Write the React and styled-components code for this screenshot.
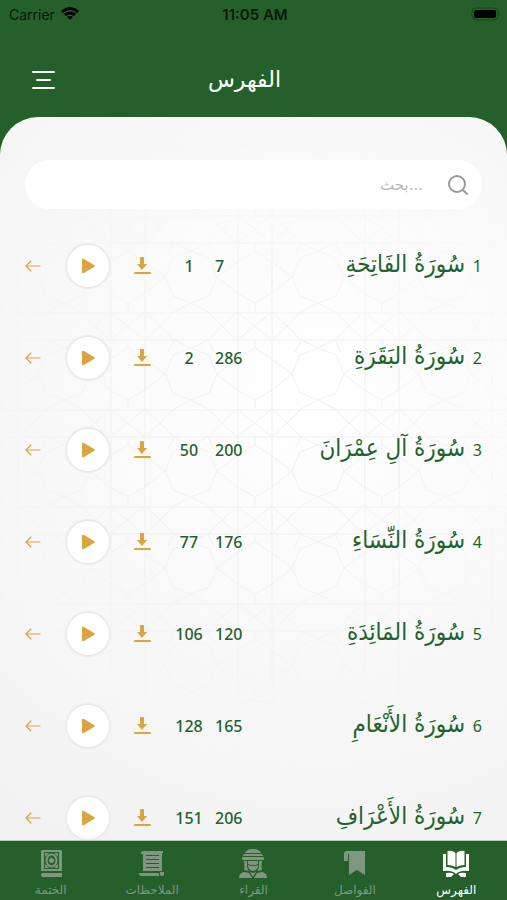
import styled, { createGlobalStyle } from "styled-components";

const green = "#25602a";
const gold = "#dca440";
const muted = "#819682";

const GlobalStyle = createGlobalStyle`
  * {
    box-sizing: border-box;
  }
  body {
    margin: 0;
    background-color: ${green};
    font-family: "Noto Sans", "DejaVu Sans", sans-serif;
  }
  button {
    border: none;
    padding: 0;
    background: transparent;
    cursor: pointer;
  }
  svg {
    display: block;
  }
`;

const Screen = styled.div`
  height: 100vh;
  display: flex;
  flex-direction: column;
  background-color: ${green};
`;

const StatusBar = styled.div`
  display: grid;
  grid-template-columns: 1fr auto 1fr;
  align-items: center;
  height: 28px;
  padding: 0 6px 0 9px;
  color: #071a09;
  font-family: Inter, sans-serif;
  font-size: 14px;
`;

const Carrier = styled.div`
  display: flex;
  align-items: center;
  gap: 6px;
`;

const Clock = styled.div`
  font-size: 15px;
  font-weight: 600;
`;

const Battery = styled.div`
  justify-self: end;
`;

const Header = styled.header`
  display: grid;
  grid-template-columns: 1fr auto 1fr;
  align-items: center;
  height: 89px;
  padding: 15px 32px 0;
`;

const MenuButton = styled.button`
  width: 23px;
`;

const Title = styled.h1`
  margin: 0;
  padding-right: 18px;
  color: white;
  font-family: "DejaVu Sans", sans-serif;
  font-size: 22px;
  font-weight: 400;
  line-height: 28px;
`;

const Panel = styled.main`
  position: relative;
  flex: 1;
  min-height: 0;
  overflow: hidden;
  border-radius: 38px 38px 0 0;
  background: radial-gradient(circle at 62% 38%, #ffffff 0%, #f9f9f9 45%, #f1f1f1 100%);
`;

const Pattern = styled.svg`
  position: absolute;
  inset: 0;
  width: 100%;
  height: 100%;
  mask-image: radial-gradient(circle at 50% 45%, black 25%, transparent 70%);
`;

const Content = styled.div`
  position: relative;
  padding: 43px 25px 0;
`;

const SearchBox = styled.label`
  display: flex;
  align-items: center;
  gap: 22px;
  height: 49px;
  padding: 0 13px 0 25px;
  border-radius: 25px;
  background-color: white;
`;

const SearchInput = styled.input`
  flex: 1;
  min-width: 0;
  border: none;
  outline: none;
  background: transparent;
  text-align: right;
  font-family: "DejaVu Sans", sans-serif;
  font-size: 15px;

  &::placeholder {
    color: #b8b8b8;
  }
`;

const List = styled.ul`
  margin: 11px 0 0;
  padding: 0;
  list-style: none;
`;

const Row = styled.li`
  display: grid;
  grid-template-columns: 40px 46px 62px 32px 1fr auto 17px;
  align-items: center;
  height: 92px;
  color: #1f632c;
`;

const IconButton = styled.button`
  justify-self: ${(props) => props.$justify || "center"};
`;

const Play = styled.button`
  display: flex;
  align-items: center;
  justify-content: center;
  width: 46px;
  height: 46px;
  border: 2px solid #ebebee;
  border-radius: 50%;
  background-color: white;
`;

const Count = styled.span`
  font-size: 16px;
  font-weight: 500;
  line-height: 20px;
  white-space: nowrap;
  text-align: center;
`;

const Verses = styled(Count)`
  padding-left: 10px;
  text-align: left;
`;

const Index = styled(Count)`
  font-weight: 400;
  text-align: right;
`;

const Name = styled.h2`
  margin: 0;
  padding-bottom: 4px;
  font-family: "DejaVu Sans Condensed", "DejaVu Sans", sans-serif;
  font-size: 24px;
  font-weight: 400;
  line-height: 44px;
  white-space: nowrap;
`;

const TabBar = styled.nav`
  display: grid;
  grid-template-columns: repeat(5, 1fr);
  height: 60px;
  border-top: 1px solid #b9cdbb;
  background-color: ${green};
`;

const Tab = styled.button`
  display: flex;
  flex-direction: column;
  align-items: center;
  gap: 3px;
  padding-top: 7px;
  color: ${(props) => (props.$active ? "#ffffff" : muted)};
  font-family: "DejaVu Sans", sans-serif;
  font-size: 12px;
  line-height: 18px;
`;

const surahs = [
  { id: 1, name: "سُورَةُ الفَاتِحَةِ", page: 1, verses: 7 },
  { id: 2, name: "سُورَةُ البَقَرَةِ", page: 2, verses: 286 },
  { id: 3, name: "سُورَةُ آلِ عِمْرَانَ", page: 50, verses: 200 },
  { id: 4, name: "سُورَةُ النِّسَاءِ", page: 77, verses: 176 },
  { id: 5, name: "سُورَةُ المَائِدَةِ", page: 106, verses: 120 },
  { id: 6, name: "سُورَةُ الأَنْعَامِ", page: 128, verses: 165 },
  { id: 7, name: "سُورَةُ الأَعْرَافِ", page: 151, verses: 206 },
];

const KhatmaIcon = () => (
  <svg width="30" height="30" viewBox="0 0 30 30" fill="currentColor">
    <path fillRule="evenodd" d="M6 2h19a1 1 0 0 1 1 1v20H5V3a1 1 0 0 1 1-1zM8 4v17h15V4z" />
    <ellipse cx="15.500" cy="12.500" rx="5" ry="6" fill="none" stroke="currentColor" strokeWidth="2" />
    <circle cx="15.500" cy="12.500" r="2.500" />
    <path d="M9 5h4l-4 4zM22 5h-4l4 4zM9 20h4l-4-4zM22 20h-4l4-4z" />
    <path d="M7 25h19v4H7a2 2 0 0 1 0-4z" />
  </svg>
);

const NotesIcon = () => (
  <svg width="30" height="30" viewBox="0 0 30 30" fill="currentColor">
    <path fillRule="evenodd" d="M6 3h20v2h-1v18h-3H6V6H4q0-3 2-3zM9 7v1h13V7zm0 4v1h13v-1zm0 4v1h13v-1zm0 4v1h13v-1z" />
    <path d="M2 25h20v3H4q-2 0-2-3z" />
    <path d="M23 24h4v2q0 2-2 2t-2-2z" />
  </svg>
);

const ReaderIcon = () => (
  <svg width="30" height="30" viewBox="0 0 30 30" fill="currentColor">
    <path d="M7 5q2-4 8-4t8 4z" />
    <path d="M6 6h18l1 2H5z" />
    <rect x="4" y="9" width="22" height="3" rx="1" />
    <path d="M6 13h3v5q0 3 2 5l-5-1q1-3 0-9zM24 13h-3v5q0 3-2 5l5-1q-1-3 0-9z" />
    <path d="M10 13h10v4q0 5-5 6-5-1-5-6z" />
    <path d="M10 16q2 3 5 1 3 2 5-1" fill="none" stroke={green} />
    <path d="M1 30q0-5 5-6l5 1 3 5zM29 30q0-5-5-6l-5 1-3 5zM12 24l3 1 3-1-3 5z" />
  </svg>
);

const BookmarkIcon = () => (
  <svg width="30" height="30" viewBox="0 0 30 30" fill="currentColor">
    <path d="M7 3h18v24l-8-5-8 5V13H4V6q0-3 3-3z" />
    <path d="M8.500 6v7" stroke={green} />
  </svg>
);

const QuranIcon = () => (
  <svg width="30" height="30" viewBox="0 0 30 30" fill="currentColor">
    <path d="M14.500 5v14q-4-2-8-2V3q5-1 8 2zM15.500 5v14q4-2 8-2V3q-5-1-8 2z" />
    <path d="M2 6h3v13q6 0 10 3 4-3 10-3V6h3v17q-9-1-13 3-4-4-13-3z" />
    <path d="M5 25q5-1 8 1l-3 3H5zM25 25q-5-1-8 1l3 3h5z" />
  </svg>
);

const tabs = [
  { label: "الختمة", icon: <KhatmaIcon /> },
  { label: "الملاحظات", icon: <NotesIcon /> },
  { label: "القراء", icon: <ReaderIcon /> },
  { label: "الفواصل", icon: <BookmarkIcon /> },
  { label: "الفهرس", icon: <QuranIcon />, active: true },
];

const Ornament = () => (
  <Pattern aria-hidden="true">
    <defs>
      <pattern id="girih" x="110" y="292" width="127" height="97" patternUnits="userSpaceOnUse">
        <g fill="none" stroke="#f0f0f0" strokeWidth="1">
          <path d="M0 1H127M0 28H127M1 0V97M35 0V97" />
          <path d="M0 28L35 0M0 0L35 28M35 0L50 14 35 28M127 0L112 14 127 28" />
          <path d="M58 40L64 28 50 14 64 0M104 40L98 28 112 14 98 0" />
          <path d="M81 36L99 43 107 62 99 81 81 88 63 81 55 62 63 43z" />
          <path d="M18 36L35 47 35 78 18 88 0 78 0 47z" />
          <path d="M35 47L55 62 35 78M127 47L107 62 127 78M64 97L81 88 98 97M64 28L81 36 98 28M18 28V36M18 88V97" />
        </g>
      </pattern>
    </defs>
    <rect width="100%" height="100%" fill="url(#girih)" />
  </Pattern>
);

const SurahRow = ({ item }) => {
  return (
    <Row>
      <IconButton $justify="start" aria-label="فتح">
        <svg width="16" height="14" viewBox="0 0 16 14" fill="none" stroke={gold} strokeWidth="1.2" strokeLinecap="round">
          <path d="M15 7H1M6 2L1 7l5 5" />
        </svg>
      </IconButton>
      <Play aria-label="تشغيل">
        <svg width="16" height="16" viewBox="0 0 16 16" fill={gold}>
          <path d="M2 2q0-2 2-1l10 6q2 1 0 2L4 15q-2 1-2-1z" />
        </svg>
      </Play>
      <IconButton aria-label="تنزيل">
        <svg width="18" height="18" viewBox="0 0 18 18" fill={gold}>
          <path d="M7 1q0-1 1-1h2q1 0 1 1v6h3l-5 6-5-6h3z" />
          <rect x="1" y="15" width="17" height="2" rx="1" />
        </svg>
      </IconButton>
      <Count>{item.page}</Count>
      <Verses>{item.verses}</Verses>
      <Name dir="rtl">{item.name}</Name>
      <Index>{item.id}</Index>
    </Row>
  );
};

const App = () => {
  return (
    <Screen>
      <GlobalStyle />
      <StatusBar>
        <Carrier>
          Carrier
          <svg width="18" height="14" viewBox="0 0 18 14" fill="none" stroke="#000" strokeWidth="3">
            <path d="M1 5q8-7 16 0M4 8q5-4 10 0" />
            <path d="M6 10q3-2 6 0l-3 3z" fill="#000" stroke="none" />
          </svg>
        </Carrier>
        <Clock>11:05 AM</Clock>
        <Battery>
          <svg width="30" height="14" viewBox="0 0 30 14">
            <rect x="1" y="1" width="26" height="12" rx="4" fill="none" stroke="#17401b" />
            <rect x="3" y="3" width="22" height="8" rx="2" fill="#000" />
            <path d="M28 5q2 2 0 4z" fill="#17401b" />
          </svg>
        </Battery>
      </StatusBar>
      <Header>
        <MenuButton aria-label="القائمة">
          <svg width="23" height="18" viewBox="0 0 23 18" stroke="#fff" strokeWidth="2" strokeLinecap="round">
            <path d="M1 1h21M5 9h13M1 17h21" />
          </svg>
        </MenuButton>
        <Title>الفهرس</Title>
      </Header>
      <Panel>
        <Ornament />
        <Content>
          <SearchBox>
            <SearchInput type="text" dir="rtl" placeholder="...بحث" aria-label="بحث" />
            <svg width="22" height="22" viewBox="0 0 22 22" fill="none" stroke="#999" strokeWidth="2" strokeLinecap="round">
              <circle cx="10" cy="10" r="8" />
              <path d="M16 16l4 4" />
            </svg>
          </SearchBox>
          <List>
            {surahs.map((item) => (
              <SurahRow item={item} key={item.id} />
            ))}
          </List>
        </Content>
      </Panel>
      <TabBar>
        {tabs.map((tab) => (
          <Tab key={tab.label} $active={tab.active}>
            {tab.icon}
            {tab.label}
          </Tab>
        ))}
      </TabBar>
    </Screen>
  );
};

export default App;
